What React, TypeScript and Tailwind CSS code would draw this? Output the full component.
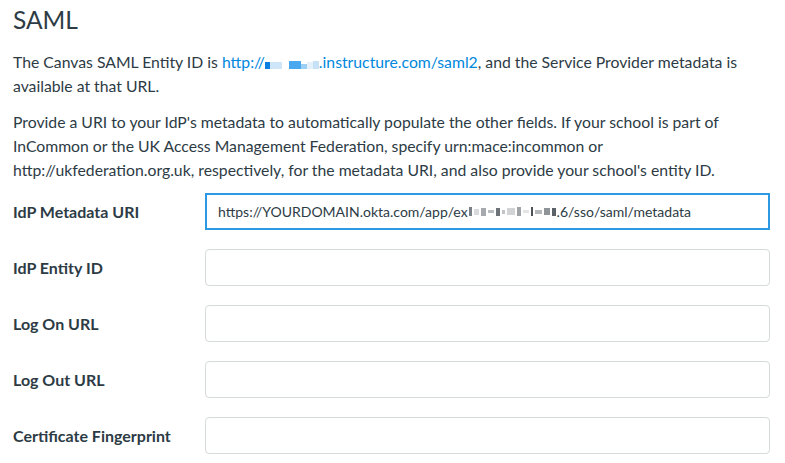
export default function App() {
  const fields = ["IdP Entity ID", "Log On URL", "Log Out URL", "Certificate Fingerprint"];

  return (
    <div className="bg-white min-h-screen text-[#2d3b45] pl-[13px] pr-[15px] pt-[4px]" style={{ fontFamily: "Lato, 'Open Sans', sans-serif" }}>
      <h2 className="text-[24.5px] leading-[32px] font-normal">SAML</h2>

      <p className="mt-[14px] text-[15.75px] leading-[24px]">
        The Canvas SAML Entity ID is{" "}
        <a className="text-[#0088dd]">
          http://
          <span className="inline-block w-[5px] h-[7px] bg-[#0a7fe0] align-[-1px]" />
          <span className="inline-block w-[12px] h-[7px] bg-[#cfe6f8] align-[-1px]" />
          <span className="inline-block w-[7px]" />
          <span className="inline-block w-[12px] h-[8px] bg-[#4aa8ef] align-[-1px]" />
          <span className="inline-block w-[6px] h-[5px] bg-[#9ccff4] align-[-1px]" />
          <span className="inline-block w-[6px] h-[7px] bg-[#e4f1fb] align-[-1px]" />
          <span className="inline-block w-[6px] h-[8px] bg-[#c7e2f7] align-[-1px]" />
          .instructure.com/saml2
        </a>
        , and the Service Provider metadata is available at that URL.
      </p>

      <p className="mt-[12px] text-[15.75px] leading-[24px]">
        Provide a URI to your IdP's metadata to automatically populate the other fields. If your school is part of InCommon or the UK Access Management Federation, specify urn:mace:incommon or http://ukfederation.org.uk, respectively, for the metadata URI, and also provide your school's entity ID.
      </p>

      <div className="mt-[11px] flex flex-col gap-[19px]">
        <div className="flex items-center">
          <label className="w-[192px] shrink-0 font-bold text-[16px]">IdP Metadata URI</label>
          <div className="flex-1 h-[37px] border-2 border-[#2b9ae2] flex items-center px-[11px] text-[14px] text-[#2d3b45]">
            https://YOURDOMAIN.okta.com/app/ex
            <span className="inline-flex items-center gap-[2px] mx-[1px]">
              <span className="w-[3px] h-[9px] bg-[#7a8086]" />
              <span className="w-[5px] h-[6px] bg-[#d8dadc]" />
              <span className="w-[5px] h-[8px] bg-[#a6aaae]" />
              <span className="w-[6px] h-[3px] bg-[#b8bcbf]" />
              <span className="w-[4px] h-[8px] bg-[#6d7378]" />
              <span className="w-[3px] h-[4px] bg-[#c2c5c8]" />
              <span className="w-[8px] h-[7px] bg-[#d1d3d5]" />
              <span className="w-[4px] h-[9px] bg-[#9ea3a7]" />
              <span className="w-[6px] h-[3px] bg-[#e2e4e5]" />
              <span className="w-[2px] h-[9px] bg-[#4d5358]" />
              <span className="w-[7px] h-[4px] bg-[#b4b8bb]" />
              <span className="w-[6px] h-[7px] bg-[#8f9498]" />
              <span className="w-[4px] h-[8px] bg-[#5c6267]" />
            </span>
            .6/sso/saml/metadata
          </div>
        </div>
        {fields.map((f) => (
          <div key={f} className="flex items-center">
            <label className="w-[192px] shrink-0 font-bold text-[16px]">{f}</label>
            <input className="flex-1 h-[37px] border border-[#d5dadd] rounded-[4px] bg-white outline-none" />
          </div>
        ))}
      </div>
    </div>
  );
}
